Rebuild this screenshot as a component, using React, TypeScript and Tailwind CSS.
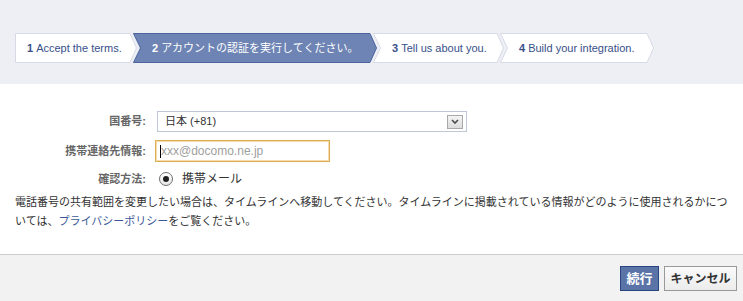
import React from "react";

type StepProps = {
  w: number;
  first?: boolean;
  active?: boolean;
  num: string;
  label: string;
  cls: string;
};

function Step({ w, first, active, num, label, cls }: StepProps) {
  const d = 7;
  const pts = first
    ? `0.5,0.5 ${w - d},0.5 ${w - 0.5},15 ${w - d},29.5 0.5,29.5`
    : `0.5,0.5 ${w - d},0.5 ${w - 0.5},15 ${w - d},29.5 0.5,29.5 ${d + 0.5},15`;
  return (
    <div className={`relative h-[30px] shrink-0 ${cls}`}>
      <svg className="absolute inset-0" width={w} height={30}>
        <polygon
          points={pts}
          fill={active ? "#6d84b4" : "#ffffff"}
          stroke={active ? "#4a64a0" : "#d6dae5"}
          strokeWidth={1}
        />
      </svg>
      <div
        className={`relative flex h-full items-center whitespace-nowrap ${first ? "pl-[12px]" : "pl-[19px]"} ${active ? "text-white" : "text-[#37508a]"}`}
      >
        <span className="font-bold mr-[3px]">{num}</span>
        <span>{label}</span>
      </div>
    </div>
  );
}

export default function App() {
  return (
    <div className="w-[743px] h-[301px] overflow-hidden bg-white text-[11px] text-[#333] font-['Liberation_Sans','Noto_Sans_CJK_JP',sans-serif]">
      <div className="h-[84px] bg-[#edeff4] pt-[33px] pl-[15px]">
        <div className="flex h-[30px]">
          <Step w={122} first num="1" label="Accept the terms." cls="w-[122px]" />
          <Step w={244} active num="2" label="アカウントの認証を実行してください。" cls="w-[244px] ml-[-4px]" />
          <Step w={131} num="3" label="Tell us about you." cls="w-[131px] ml-[-4px]" />
          <Step w={154} num="4" label="Build your integration." cls="w-[154px] ml-[-4px]" />
        </div>
      </div>

      <div className="h-[170px] pt-[27px]">
        <div className="grid grid-cols-[146px_auto] gap-x-[9px] items-center">
          <div className="text-right font-bold text-[#666]">国番号:</div>
          <div className="ml-[2px] w-[310px] h-[21px] border border-[#bdc7d8] bg-white flex items-center justify-between pl-[7px] pr-[3px]">
            <span className="text-[#333]">日本 (+81)</span>
            <div className="w-[16px] h-[14px] border border-[#a9a9a9] bg-gradient-to-b from-[#f4f4f4] to-[#dcdcdc] flex items-center justify-center">
              <svg width="8" height="5" viewBox="0 0 8 5">
                <polyline points="1,1 4,4 7,1" fill="none" stroke="#4a4a4a" strokeWidth="1.6" />
              </svg>
            </div>
          </div>

          <div className="mt-[8px] text-right font-bold text-[#666]">携帯連絡先情報:</div>
          <div className="mt-[8px] w-[175px] h-[22px] border border-[#dcae56] shadow-[inset_0_0_0_1px_#f3dcaa] bg-white flex items-center pl-[4px]">
            <span className="w-[1px] h-[13px] bg-[#000]"></span>
            <span className="text-[#a0a0a0] text-[12px]">xxx@docomo.ne.jp</span>
          </div>

          <div className="mt-[8px] h-[18px] flex items-center justify-end font-bold text-[#666]">確認方法:</div>
          <div className="mt-[8px] h-[18px] flex items-center ml-[4px]">
            <div className="w-[14px] h-[14px] rounded-full border border-[#6f6f6f] bg-gradient-to-b from-[#ffffff] to-[#e6e6e6] flex items-center justify-center">
              <div className="w-[6px] h-[6px] rounded-full bg-[#1e1e1e]"></div>
            </div>
            <span className="ml-[9px] text-[12px] text-[#333]">携帯メール</span>
          </div>
        </div>

        <div className="mt-[5px] pl-[15px] leading-[19px] whitespace-nowrap">
          <div>電話番号の共有範囲を変更したい場合は、タイムラインへ移動してください。タイムラインに掲載されている情報がどのように使用されるかにつ</div>
          <div>
            いては、<span className="text-[#3b5998]">プライバシーポリシー</span>をご覧ください。
          </div>
        </div>
      </div>

      <div className="h-[47px] border-t border-[#cccccc] bg-[#f2f2f2] flex justify-end items-start pt-[11px] pr-[6px] gap-[5px]">
        <button className="h-[25px] w-[39px] border border-[#29447e] bg-[#5b74a8] text-white font-bold text-[13px] flex items-center justify-center">
          続行
        </button>
        <button className="h-[25px] w-[73px] border border-[#999999] bg-gradient-to-b from-[#fafafa] to-[#ececec] text-[#333] font-bold text-[12px] flex items-center justify-center">
          キャンセル
        </button>
      </div>
    </div>
  );
}
